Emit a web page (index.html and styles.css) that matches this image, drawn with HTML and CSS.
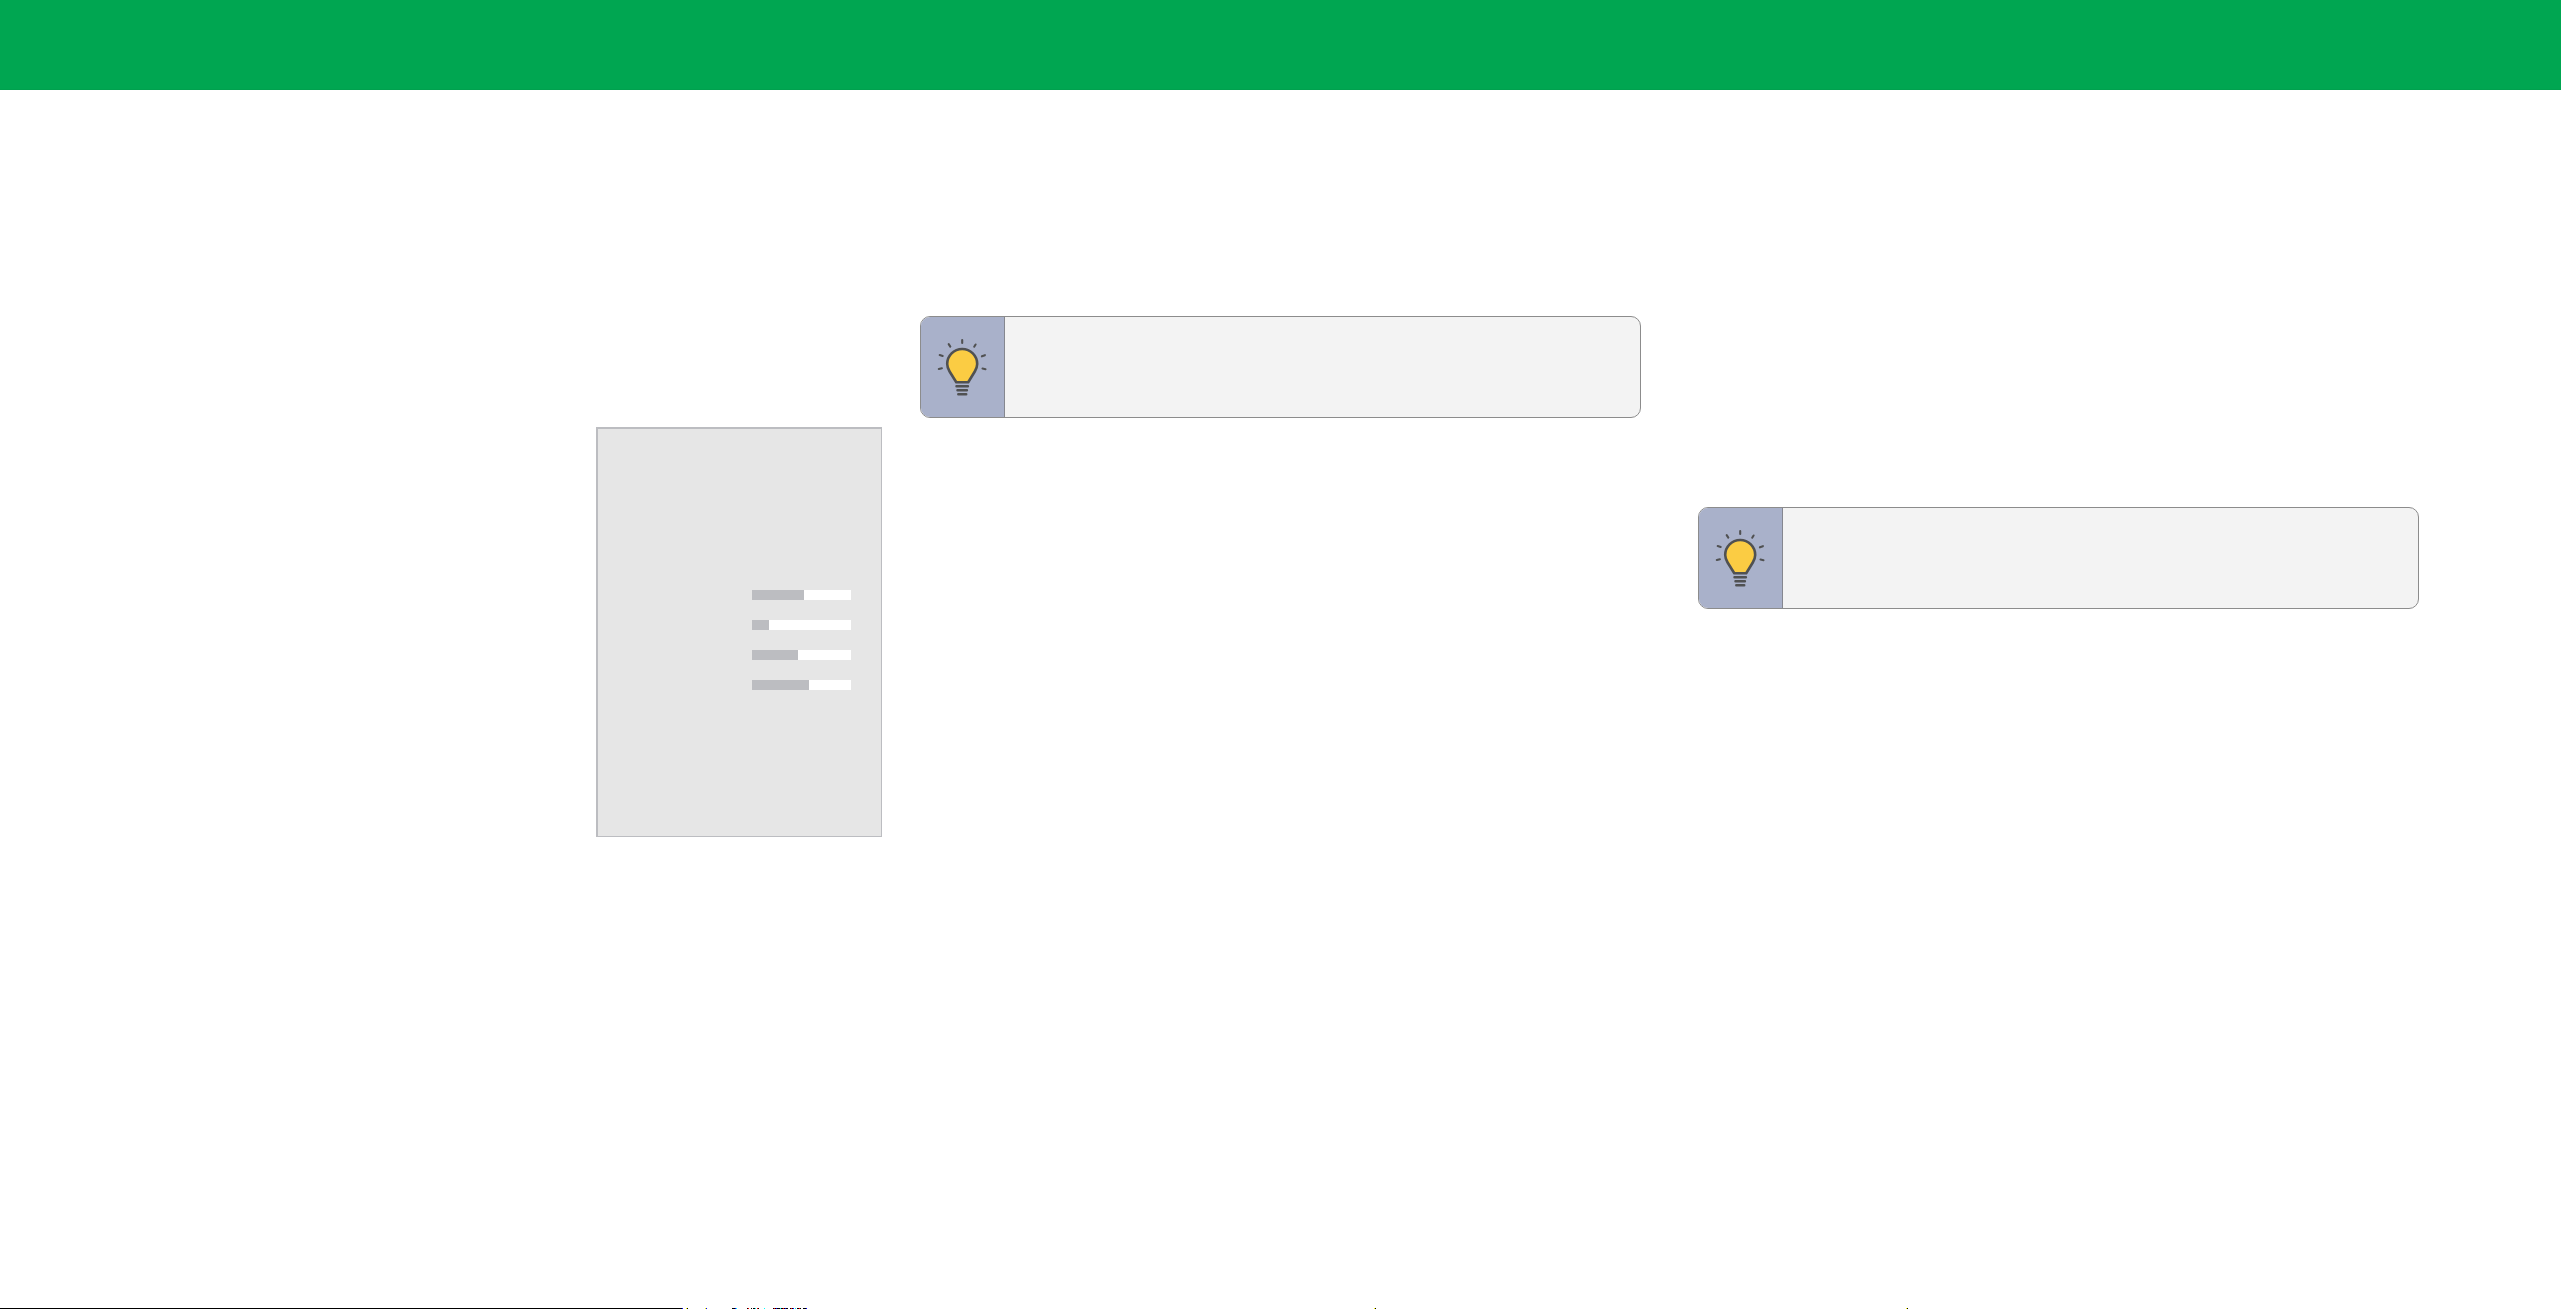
FILE: index.html
```html
<!DOCTYPE html>
<html>
<head>
  <meta charset="utf-8">
  <title>Report</title>
  <link rel="stylesheet" href="styles.css">
</head>
<body>
  <svg class="symbols" width="0" height="0">
    <symbol id="bulb" viewBox="0 0 52 60">
      <path class="glass" d="M19.300 45.300L12.600 34.500C11 31.800 10.200 29.500 10.200 27A15 15 0 0 1 40.200 27C40.200 29.500 39.400 31.800 37.800 34.500L31.200 45.300Z"/>
      <path class="line" d="M19.500 49.300H30.900M20.500 53.300H29.900M21.300 57.300H29.200"/>
      <path class="line ray" d="M25.200 3V6M11.700 7.200L13.300 9.600M38.600 7.500L37.200 9.700M2.700 18L5.700 19M47.900 18.200L44.900 19.300M1.800 32L4.900 31.200M48.500 32.300L45.500 31.500"/>
    </symbol>
  </svg>
  <header></header>
  <main>
    <section class="stats">
      <div class="bar"><div class="fill" style="width: 52px"></div></div>
      <div class="bar"><div class="fill" style="width: 17px"></div></div>
      <div class="bar"><div class="fill" style="width: 46px"></div></div>
      <div class="bar"><div class="fill" style="width: 57px"></div></div>
    </section>
    <section class="tip">
      <div class="tip-icon"><svg class="bulb"><use href="#bulb"/></svg></div>
    </section>
    <section class="tip tip-right">
      <div class="tip-icon"><svg class="bulb"><use href="#bulb"/></svg></div>
    </section>
  </main>
  <footer>
    <svg class="rule" width="2561" height="1" shape-rendering="crispEdges">
      <path fill="#000" d="M0 0H683V1H0ZM687 0h1v1h-1ZM732 0h3v1h-3ZM747 0h2v1h-2ZM751 0h1v1h-1ZM753 0h2v1h-2ZM758 0h1v1h-1ZM773 0h7v1h-7ZM781 0h7v1h-7ZM790 0h4v1h-4ZM797 0h4v1h-4ZM803 0h4v1h-4ZM1375 0h1v1h-1ZM1907 0h1v1h-1Z"/>
      <path fill="#00f" d="M682 0h1v1h-1ZM706 0h1v1h-1ZM735 0h1v1h-1ZM776 0h1v1h-1ZM785 0h1v1h-1ZM793 0h1v1h-1ZM806 0h1v1h-1Z"/>
      <path fill="#f00" d="M748 0h1v1h-1ZM757 0h1v1h-1ZM774 0h1v1h-1ZM783 0h1v1h-1ZM791 0h1v1h-1ZM799 0h1v1h-1Z"/>
      <path fill="#ff0" d="M686 0h1v1h-1ZM705 0h1v1h-1ZM1374 0h1v1h-1ZM1906 0h1v1h-1Z"/>
      <path fill="#0ff" d="M736 0h1v1h-1ZM755 0h1v1h-1ZM764 0h1v1h-1ZM780 0h1v1h-1ZM795 0h1v1h-1Z"/>
    </svg>
  </footer>
</body>
</html>
```

FILE: styles.css
```css
* {
  box-sizing: border-box;
}
body {
  font-family: "Liberation Sans", Arial, sans-serif;
  margin: 0;
  height: 1309px;
  display: flex;
  flex-direction: column;
  background-color: #fff;
}
.symbols {
  display: none;
}
header {
  background-color: #00a651;
  height: 90px;
  flex: none;
  border-bottom: 1px solid #00a04e;
}
main {
  flex: 1;
  display: flex;
  align-items: flex-start;
  padding-left: 596px;
}
.stats {
  width: 286px;
  height: 410px;
  margin-top: 337px;
  padding: 161px 0 0 154px;
  background-color: #e6e6e6;
  border: 1px solid #bcbdc1;
  border-width: 2px 1px 1px 2px;
  display: flex;
  flex-direction: column;
  gap: 20px;
}
.bar {
  width: 99px;
  height: 10px;
  background-color: #fff;
}
.fill {
  height: 10px;
  background-color: #bcbdc1;
}
.tip {
  width: 721px;
  height: 102px;
  margin: 226px 0 0 38px;
  border: 1px solid #8c8c8c;
  border-radius: 10px;
  background-color: #f3f3f3;
  overflow: hidden;
}
.tip-right {
  margin: 417px 0 0 57px;
}
.tip-icon {
  width: 84px;
  height: 100%;
  padding: 20px 0 0 16px;
  background-color: #a9b1ca;
  border-right: 1px solid #85878f;
}
.bulb {
  display: block;
  width: 52px;
  height: 60px;
}
.glass {
  fill: #fbcc43;
  stroke: #505152;
  stroke-width: 2.600;
  stroke-linejoin: round;
}
.line {
  fill: none;
  stroke: #505152;
  stroke-width: 2.500;
  stroke-linecap: round;
}
.ray {
  stroke-width: 2.100;
}
footer {
  height: 1px;
}
.rule {
  display: block;
}
```
